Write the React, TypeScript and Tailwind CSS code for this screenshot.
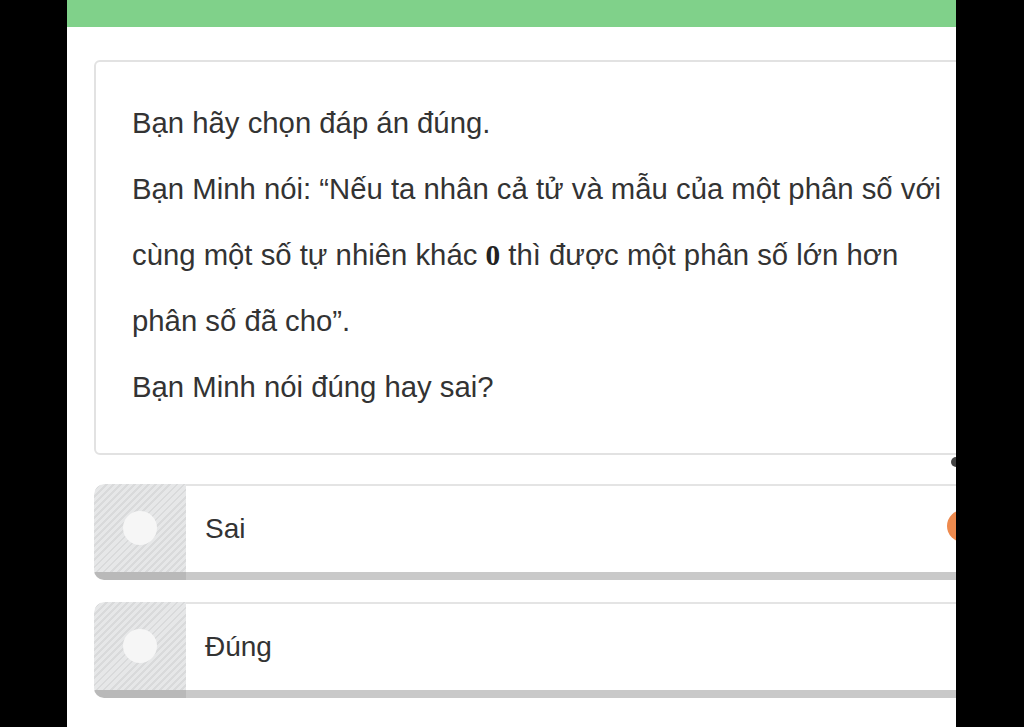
import React from "react";

const stripes =
  "bg-[repeating-linear-gradient(135deg,#e6e7e8_0px,#e6e7e8_3px,#d9dadb_3px,#d9dadb_5px)]";

function Option({ label }: { label: string }) {
  return (
    <div className="flex h-[96px] w-[880px] overflow-hidden rounded-[10px] bg-white">
      <div className="flex w-[92px] flex-col">
        <div className={`flex flex-1 items-center justify-center rounded-tl-[10px] ${stripes}`}>
          <div className="h-[34px] w-[34px] rounded-full bg-[#f6f6f6]" />
        </div>
        <div className="h-[8px] bg-[#b9b9b9]" />
      </div>
      <div className="flex flex-1 flex-col">
        <div className="flex flex-1 items-center border-t-2 border-[#e4e4e4] pl-[19px] text-[28px] text-[#333]">
          {label}
        </div>
        <div className="h-[8px] bg-[#c9c9c9]" />
      </div>
    </div>
  );
}

export default function App() {
  return (
    <div
      className="flex h-[727px] w-[1024px] overflow-hidden bg-black"
      style={{ fontFamily: "'Liberation Sans', Arial, sans-serif" }}
    >
      <div className="w-[67px] shrink-0 bg-black" />
      <div className="relative flex w-[889px] shrink-0 flex-col overflow-hidden bg-white">
        <div className="h-[27px] shrink-0 bg-[#80d18a]" />
        <div className="pl-[27px] pt-[33px]">
          <div className="h-[395px] w-[900px] rounded-[6px] border-2 border-[#e2e2e2] pl-[36px] pt-[28px]">
            <div className="w-[840px] text-[29.3px] leading-[66px] text-[#333]">
              <p>Bạn hãy chọn đáp án đúng.</p>
              <p>
                Bạn Minh nói: “Nếu ta nhân cả tử và mẫu của một phân số với
                <br />
                cùng một số tự nhiên khác{" "}
                <span style={{ fontFamily: "'Liberation Serif', serif" }} className="font-bold text-[#222]">0</span> thì được một
                phân số lớn hơn
                <br />
                phân số đã cho”.
              </p>
              <p>Bạn Minh nói đúng hay sai?</p>
            </div>
          </div>
          <div className="mt-[29px] flex flex-col gap-[22px]">
            <Option label="Sai" />
            <Option label="Đúng" />
          </div>
        </div>
        <div className="absolute left-[880px] top-[510px] h-[32px] w-[32px] rounded-full bg-[#ee8a4e]" />
        <div className="absolute left-[884px] top-[457px] h-[10px] w-[10px] rounded-full bg-[#444]" />
      </div>
      <div className="flex-1 bg-black" />
    </div>
  );
}
